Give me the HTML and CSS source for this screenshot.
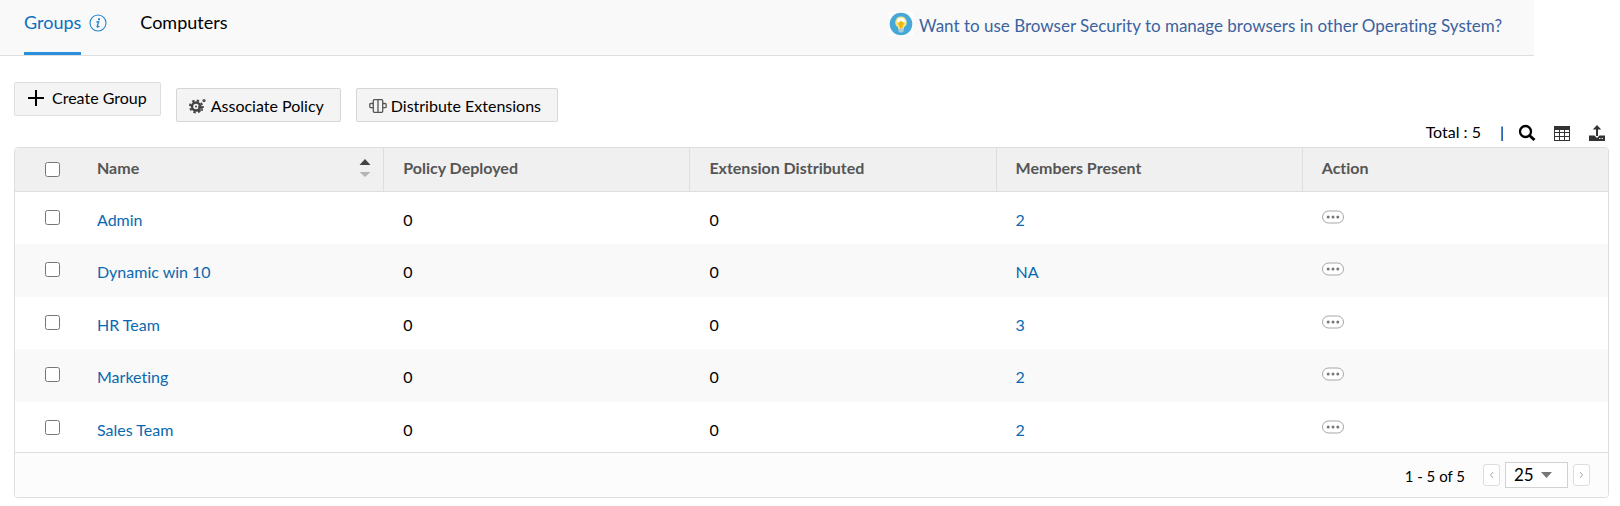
FILE: index.html
```html
<!DOCTYPE html>
<html lang="en">
<head>
<meta charset="utf-8">
<meta name="viewport" content="width=device-width, initial-scale=1">
<title>Groups</title>
<link rel="stylesheet" href="styles.css">
</head>
<body>
<svg class="defs" width="0" height="0" aria-hidden="true">
  <symbol id="more" viewBox="0 0 22 14">
    <rect x=".5" y="1" width="21" height="12" rx="6" fill="#fff" stroke="#a6a6a6"/>
    <circle cx="6.2" cy="7" r="1.5" fill="#777"/><circle cx="11" cy="7" r="1.5" fill="#777"/><circle cx="15.8" cy="7" r="1.5" fill="#777"/>
  </symbol>
</svg>
<header class="topbar">
  <nav class="tabs">
    <a class="tab tab-active" href="#groups">Groups</a>
    <button class="info" type="button" aria-label="About groups">
      <svg width="18" height="18" viewBox="0 0 18 18"><circle cx="9" cy="9" r="8" fill="none" stroke="#2383c9" stroke-width="1.1"/><circle cx="10" cy="5.2" r="1.1" fill="#2383c9"/><path d="M7.3 8.2 9.6 7.6 8.2 12.4Q8 13.400 9 13L10.400 11.900" fill="none" stroke="#2383c9" stroke-width="1.3"/></svg>
    </button>
    <a class="tab" href="#computers">Computers</a>
  </nav>
  <a class="promo" href="#other-os">
    <svg width="24" height="24" viewBox="0 0 24 24"><path fill="#fff" d="M0 0h24v24H0z"/><circle cx="12" cy="12" r="11.300" fill="#45a8d8"/><path d="M12 4.500a5.800 5.800 0 0 0-3 10.700V17h6v-1.800a5.800 5.800 0 0 0-3-10.700z" fill="#f6e58b"/><path d="M8 10a4 4 0 0 1 8 0z" fill="#fff"/><path d="M12 8.500 15 11.500 13.500 14.500V16h-3v-1.500L9 11.500z" fill="#f0b90b"/><path d="M9.200 16.500h5.600v2.500l-1.500 1.600h-2.600L9.200 19z" fill="#a9cbd8"/></svg>
    <span>Want to use Browser Security to manage browsers in other Operating System?</span>
  </a>
</header>
<main class="content">
  <div class="actions">
    <button class="btn btn-create" type="button">
      <svg width="16" height="16" viewBox="0 0 16 16"><path d="M8 0v16M0 8h16" stroke="#000" stroke-width="2"/></svg>
      Create Group</button>
    <button class="btn" type="button">
      <svg width="18" height="16" viewBox="0 0 18 16"><circle cx="7" cy="8.500" r="4" fill="none" stroke="#444" stroke-width="2.400"/><circle cx="7" cy="8.500" r="6" fill="none" stroke="#444" stroke-width="2" stroke-dasharray="2.400 2.312"/><circle cx="7" cy="8.500" r="1" fill="#444"/><path d="M9 9h6M10 12h4" stroke="#444" stroke-width="1.500"/><circle cx="15" cy="2.600" r="1.600" fill="#555"/></svg>
      Associate Policy</button>
    <button class="btn" type="button">
      <svg width="18" height="16" viewBox="0 0 18 16" fill="none" stroke="#555" stroke-width="1.300"><path d="M5.300 1.700h7.400q1 0 1 1v10.600q0 1-1 1H5.300q-1 0-1-1V2.700q0-1 1-1zM9 2v12M4 5.500H2q-1.200 0-1.200 1.200v1.800q0 1.200 1.200 1.200h2M14 5.500h2q1.200 0 1.200 1.200v1.800q0 1.200-1.200 1.200h-2"/></svg>
      Distribute Extensions</button>
  </div>
  <div class="tools">
    <span class="total">Total : 5</span>
    <span class="divider">|</span>
    <button class="tool" type="button" aria-label="Search"><svg width="18" height="18" viewBox="0 0 18 18" fill="none" stroke="#000"><circle cx="7.500" cy="7.500" r="5.500" stroke-width="2.300"/><path d="m11.500 11.500 5 4.500" stroke-width="3"/></svg></button>
    <button class="tool" type="button" aria-label="Columns"><svg width="18" height="18" viewBox="0 0 18 18"><path d="M1 2h16v15H1z" fill="#333"/><path d="M2 6h4v2H2zM7 6h4v2H7zM12 6h4v2h-4zM2 9h4v3H2zM7 9h4v3H7zM12 9h4v3h-4zM2 13h4v3H2zM7 13h4v3H7zM12 13h4v3h-4z" fill="#fff"/></svg></button>
    <button class="tool" type="button" aria-label="Export"><svg width="18" height="18" viewBox="0 0 18 18"><path d="M9 1 4.800 5.500H8V12h2V5.500h3.200z" fill="#333"/><path d="M1 11.500h5.500L9 14l2.500-2.500H17V17H1z" fill="#333"/><path d="M11 14.500h1.500M13.500 14.500H15" stroke="#ddd"/></svg></button>
  </div>
  <section class="panel">
    <table class="grid">
      <thead>
        <tr>
          <th class="check"><input type="checkbox" aria-label="Select all groups"></th>
          <th class="name"><div class="sortable">Name
            <button class="sort" type="button" aria-label="Sort by name"><svg width="12" height="18" viewBox="0 0 12 18"><path d="m6 0 5.500 6H.5z" fill="#444"/><path d="m6 18 5.500-5H.5z" fill="#b5b5b5"/></svg></button></div></th>
          <th>Policy Deployed</th><th>Extension Distributed</th><th>Members Present</th><th>Action</th>
        </tr>
      </thead>
      <tbody>
        <tr><td class="check"><input type="checkbox" aria-label="Select Admin"></td><td><a href="#admin">Admin</a></td><td>0</td><td>0</td><td><a href="#m1">2</a></td><td class="act"><button type="button" aria-label="Actions for Admin"><svg width="22" height="14"><use href="#more"/></svg></button></td></tr>
        <tr><td class="check"><input type="checkbox" aria-label="Select Dynamic win 10"></td><td><a href="#dynamic">Dynamic win 10</a></td><td>0</td><td>0</td><td><a href="#m2">NA</a></td><td class="act"><button type="button" aria-label="Actions for Dynamic win 10"><svg width="22" height="14"><use href="#more"/></svg></button></td></tr>
        <tr><td class="check"><input type="checkbox" aria-label="Select HR Team"></td><td><a href="#hr">HR Team</a></td><td>0</td><td>0</td><td><a href="#m3">3</a></td><td class="act"><button type="button" aria-label="Actions for HR Team"><svg width="22" height="14"><use href="#more"/></svg></button></td></tr>
        <tr><td class="check"><input type="checkbox" aria-label="Select Marketing"></td><td><a href="#marketing">Marketing</a></td><td>0</td><td>0</td><td><a href="#m4">2</a></td><td class="act"><button type="button" aria-label="Actions for Marketing"><svg width="22" height="14"><use href="#more"/></svg></button></td></tr>
        <tr><td class="check"><input type="checkbox" aria-label="Select Sales Team"></td><td><a href="#sales">Sales Team</a></td><td>0</td><td>0</td><td><a href="#m5">2</a></td><td class="act"><button type="button" aria-label="Actions for Sales Team"><svg width="22" height="14"><use href="#more"/></svg></button></td></tr>
      </tbody>
    </table>
    <footer class="pager">
      <span class="range">1 - 5 of 5</span>
      <button class="page" type="button" aria-label="Previous page"><svg width="5" height="8" viewBox="0 0 5 8"><path d="M4 1 1.500 4 4 7" fill="none" stroke="#aaa"/></svg></button>
      <select class="size" aria-label="Rows per page"><option>25</option><option>50</option></select>
      <button class="page" type="button" aria-label="Next page"><svg width="5" height="8" viewBox="0 0 5 8"><path d="M1 1 3.500 4 1 7" fill="none" stroke="#aaa"/></svg></button>
    </footer>
  </section>
</main>
</body>
</html>
```
FILE: styles.css
```css
* { box-sizing: border-box; }
body {
  margin: 0;
  background: #fff;
  color: #000;
  font: 16px/20px Lato, sans-serif;
  font-variant-ligatures: none;
}
button { font: inherit; font-variant-ligatures: none; color: inherit; cursor: pointer; }
a { color: #0b68b0; text-decoration: none; }
svg { display: block; flex: none; }
.defs { position: absolute; }

.topbar {
  display: flex;
  justify-content: space-between;
  margin-right: 86px;
  padding: 0 32px 0 24px;
  height: 56px;
  background: #f9f9f9;
  border-bottom: 1px solid #dedede;
  font-size: 18px;
}
.tabs { display: flex; align-items: flex-start; }
.tab { height: 55px; padding-top: 12px; color: #000; }
.tab-active { color: #0b6fc0; border-bottom: 3px solid #2a90dc; }
.info { margin: 14px 33px 0 8px; padding: 0; border: 0; background: none; }
.promo { display: flex; gap: 6px; align-items: center; height: 48px; color: #3c62a0; font-size: 17px; }
.promo span { padding-top: 3px; }

.content { padding: 26px 11px 8px 14px; }
.actions { display: flex; gap: 15px; align-items: flex-end; height: 40px; }
.btn {
  display: flex;
  align-items: center;
  gap: 4px;
  height: 34px;
  padding: 2px 16px 0 12px;
  background: #f4f4f4;
  border: 1px solid #d6d6d6;
  border-radius: 2px;
}
.btn-create { align-self: flex-start; gap: 8px; padding: 0 13px 2px; border-color: #dedede; }

.tools {
  display: flex;
  justify-content: flex-end;
  align-items: center;
  height: 25px;
  padding: 0 3px 3px 0;
}
.total, .divider { padding-bottom: 2px; }
.divider { margin: 0 14px 0 19px; }
.tool { padding: 0; margin-left: 17px; border: 0; background: none; }
.divider + .tool { margin-left: 0; }

.panel { border: 1px solid #dedede; border-radius: 4px; overflow: hidden; }
.grid { width: 100%; table-layout: fixed; border-collapse: separate; border-spacing: 0; }
.grid th {
  height: 44px;
  padding: 0 19px 3px;
  background: #f0f0f0;
  border-bottom: 1px solid #dedede;
  border-left: 1px solid #dedede;
  color: #555;
  text-align: left;
}
.grid th.check, .grid td.check { width: 62px; padding-left: 30px; padding-right: 0; border-left: 0; }
.grid th.check { padding-bottom: 0; }
.grid th.name { border-left: 0; padding-left: 20px; }
.grid td { height: 52px; padding: 18px 18px 0 20px; vertical-align: top; }
.grid tbody tr:nth-child(even) td { height: 53px; background: #f9f9f9; }
.grid tbody tr:last-child td { height: 50px; }
.grid input { display: block; width: 15px; height: 15px; margin: 0; }
.act button { display: block; padding: 0; border: 0; background: none; }
.sortable { display: flex; justify-content: space-between; align-items: center; }
.sort { margin-right: -7px; padding: 0; border: 0; background: none; }

.pager {
  display: flex;
  justify-content: flex-end;
  align-items: center;
  height: 45px;
  padding-right: 18px;
  background: #fcfcfc;
  border-top: 1px solid #dedede;
}
.range { margin-right: 18px; padding-top: 2px; font-size: 15px; }
.page {
  display: flex;
  align-items: center;
  justify-content: center;
  width: 17px;
  height: 22px;
  padding: 0;
  background: #fff;
  border: 1px solid #dedede;
  border-radius: 3px;
}
.size {
  appearance: none;
  width: 63px;
  height: 26px;
  margin: 0 5px;
  padding: 0 8px;
  font: 17px/24px Lato, sans-serif;
  color: #000;
  border: 1px solid #d2d2d2;
  border-radius: 0;
  background: url("data:image/svg+xml,%3Csvg xmlns='http://www.w3.org/2000/svg' width='11' height='6'%3E%3Cpath d='M0 0h11L5.500 6z' fill='%23777'/%3E%3C/svg%3E") no-repeat right 15px center #fff;
}
```
